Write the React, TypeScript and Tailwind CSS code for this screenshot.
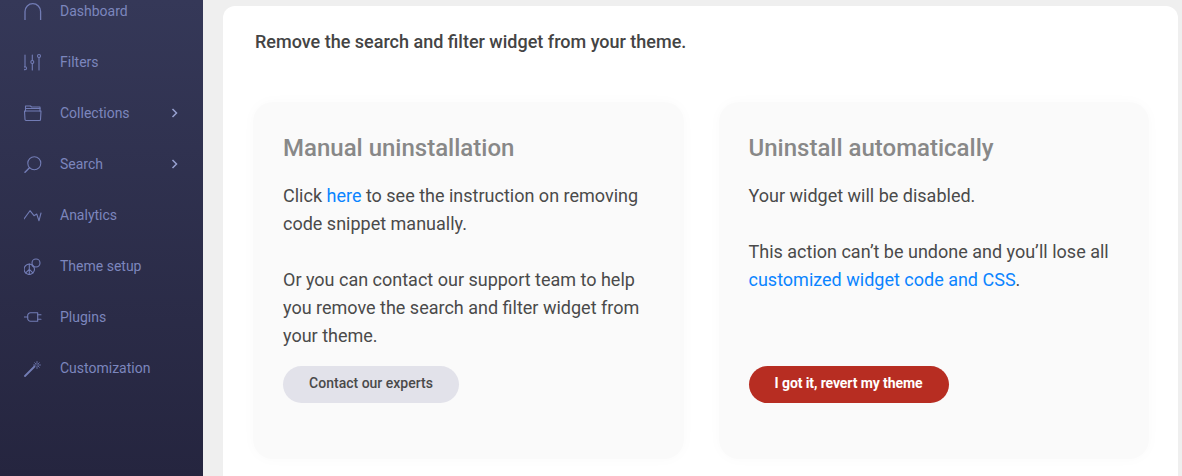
import type { ReactNode } from 'react';

const roboto = "font-['Roboto',sans-serif]";

function Svg({ children }: { children: ReactNode }) {
  return (
    <svg width="18" height="18" viewBox="0 0 18 18" fill="none" stroke="currentColor" strokeWidth="1.100" strokeLinecap="round" strokeLinejoin="round">
      {children}
    </svg>
  );
}

const navItems: { label: string; icon: ReactNode; arrow?: boolean }[] = [
  {
    label: 'Dashboard',
    icon: <Svg><path d="M1 18V9.500a7.800 7.800 0 0 1 15.600 0V18" strokeWidth="1.300" /></Svg>,
  },
  {
    label: 'Filters',
    icon: (
      <Svg>
        <path d="M1 2v11.800M8.300 2v5.500M8.300 10.500V17M15 4.500V17" />
        <circle cx="1" cy="15.300" r="1.500" />
        <circle cx="8.300" cy="9" r="1.500" />
        <circle cx="15" cy="3" r="1.500" />
      </Svg>
    ),
  },
  {
    label: 'Collections',
    arrow: true,
    icon: (
      <Svg>
        <path d="M1.500 7V2h5l1 1h8.500v4" />
        <path d="M1.500 4.500H16" />
        <path d="M.500 7h16.500l-.500 8.500a1 1 0 0 1-1 1H2a1 1 0 0 1-1-1z" />
      </Svg>
    ),
  },
  {
    label: 'Search',
    arrow: true,
    icon: (
      <Svg>
        <circle cx="10.300" cy="8.300" r="6.500" />
        <path d="M5.500 12.800 1 17.300" strokeWidth="1.500" />
      </Svg>
    ),
  },
  {
    label: 'Analytics',
    icon: <Svg><path d="M0 13 6 4.700l4 5 2.700-1.700 2.300 6.700 2-7.700" /></Svg>,
  },
  {
    label: 'Theme setup',
    icon: (
      <Svg>
        <circle cx="5.300" cy="12.300" r="5.200" />
        <circle cx="12" cy="6" r="4" />
        <path d="M5.300 7.100v10.400M5.300 12.300l-3.600 3.600M5.300 12.300l3.600 3.600M8.200 8.500 9.500 9.800" />
      </Svg>
    ),
  },
  {
    label: 'Plugins',
    icon: (
      <Svg>
        <path d="M.300 9h3.400M13.700 6.800H17M13.700 11.200H17" />
        <path d="M6.500 4.700h7.200v8.600H6.500a2.800 2.800 0 0 1-2.800-2.800V7.500a2.800 2.800 0 0 1 2.800-2.800z" />
      </Svg>
    ),
  },
  {
    label: 'Customization',
    icon: (
      <Svg>
        <path d="M1 17 10.500 7.500" strokeWidth="1.800" />
        <path d="M13 2.500v2.300M13 7.200v2.300M9.500 6h2.300M14.200 6h2.300M10.700 3.700l1.400 1.400M15.300 3.700l-1.400 1.400M15.300 8.300l-1.400-1.400" strokeWidth="0.800" />
      </Svg>
    ),
  },
];

function NavItem({ label, icon, arrow }: { label: string; icon: ReactNode; arrow?: boolean }) {
  return (
    <li className="flex h-[51px] items-center pl-6 pr-[25px] text-[#7c86bd]">
      <span className="flex w-[36px] shrink-0 text-[#727cb5]">{icon}</span>
      <span className="flex-1 text-sm leading-5">{label}</span>
      {arrow && (
        <svg width="7" height="10" viewBox="0 0 7 10" fill="none" stroke="#98a1d0" strokeWidth="1.500">
          <path d="M1.500 1 5.500 5l-4 4" />
        </svg>
      )}
    </li>
  );
}

export default function App() {
  return (
    <div className={`flex h-[476px] w-[1182px] overflow-hidden bg-[#efefef] ${roboto}`}>
      <aside className="h-full w-[203px] shrink-0 bg-gradient-to-b from-[#353858] to-[#25253f]">
        <ul className="mt-[-15px]">
          {navItems.map((item) => (
            <NavItem key={item.label} {...item} />
          ))}
        </ul>
      </aside>

      <main className="flex-1 pl-5 pr-1 pt-[6px]">
        <div className="h-[520px] rounded-t-xl bg-white pl-[30px] pr-[29px] pt-6">
          <h1 className="ml-[2px] text-lg font-medium leading-6 text-[#444444]">
            Remove the search and filter widget from your theme.
          </h1>

          <div className="mt-12 grid grid-cols-2 gap-[35px]">
            <section className="flex h-[357px] flex-col rounded-[20px] bg-[#fafafa] px-[30px] pt-[30px] shadow-[0_0_14px_rgba(0,0,0,0.025)]">
              <h2 className="text-2xl font-medium leading-8 text-[#888888]">Manual uninstallation</h2>
              <div className="mt-[18px] text-lg leading-7 text-[#4a4a4a]">
                <p>
                  Click <a className="text-[#0a84ff]">here</a> to see the instruction on removing code snippet manually.
                </p>
                <p className="mt-7">
                  Or you can contact our support team to help you remove the search and filter widget from your theme.
                </p>
              </div>
              <button type="button" className="mt-4 h-[37px] w-[176px] rounded-full bg-[#e2e2ea] pb-[3px] text-sm font-medium text-[#4a4a4a]">
                Contact our experts
              </button>
            </section>

            <section className="flex h-[357px] flex-col rounded-[20px] bg-[#fafafa] px-[30px] pt-[30px] shadow-[0_0_14px_rgba(0,0,0,0.025)]">
              <h2 className="text-2xl font-medium leading-8 text-[#888888]">Uninstall automatically</h2>
              <div className="mt-[18px] text-lg leading-7 text-[#4a4a4a]">
                <p>Your widget will be disabled.</p>
                <p className="mt-7">
                  This action can’t be undone and you’ll lose all{' '}
                  <a className="text-[#0a84ff]">customized widget code and CSS</a>.
                </p>
              </div>
              <button type="button" className="mt-[72px] h-[37px] w-[200px] rounded-full bg-[#b72d22] pb-[3px] text-sm font-bold tracking-[-0.1px] text-white">
                I got it, revert my theme
              </button>
            </section>
          </div>
        </div>
      </main>
    </div>
  );
}
